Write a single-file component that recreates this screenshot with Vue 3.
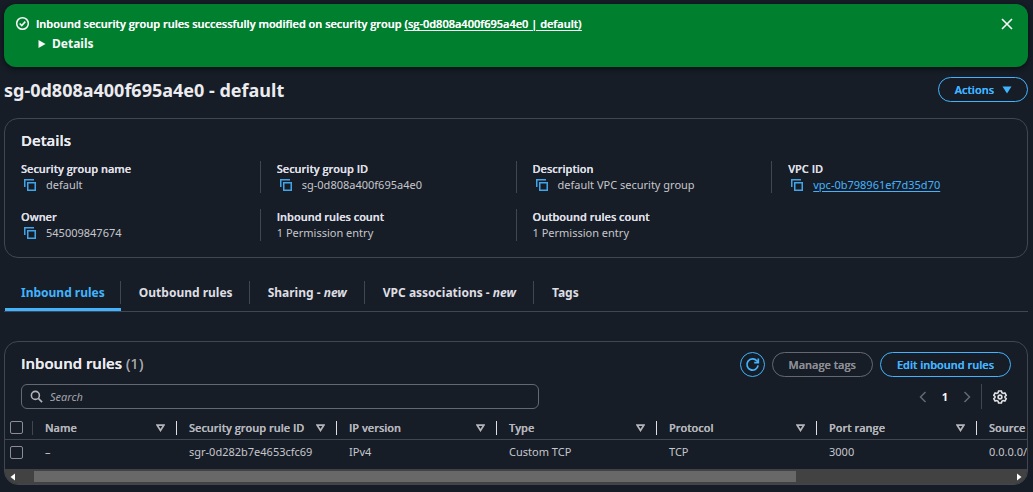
<script setup>
import { ref } from 'vue'

const details = [
  { label: 'Security group name', value: 'default', copy: true },
  { label: 'Security group ID', value: 'sg-0d808a400f695a4e0', copy: true },
  { label: 'Description', value: 'default VPC security group', copy: true },
  { label: 'VPC ID', value: 'vpc-0b798961ef7d35d70', copy: true, link: true },
  { label: 'Owner', value: '545009847674', copy: true },
  { label: 'Inbound rules count', value: '1 Permission entry' },
  { label: 'Outbound rules count', value: '1 Permission entry' },
]

const tabs = [
  { name: 'Inbound rules' },
  { name: 'Outbound rules' },
  { name: 'Sharing', isNew: true },
  { name: 'VPC associations', isNew: true },
  { name: 'Tags' },
]
const activeTab = ref('Inbound rules')

const columns = ['Name', 'Security group rule ID', 'IP version', 'Type', 'Protocol', 'Port range', 'Source']
const rows = [['–', 'sgr-0d282b7e4653cfc69', 'IPv4', 'Custom TCP', 'TCP', '3000', '0.0.0.0/']]
const search = ref('')
</script>

<template>
  <main class="page">
    <section class="flash" role="status">
      <svg class="flash-icon" viewBox="0 0 16 16" aria-hidden="true">
        <circle cx="8" cy="8" r="6.2" />
        <path d="M5 8l2.2 2.2L11 6" />
      </svg>
      <div class="flash-body">
        <div class="flash-text">
          Inbound security group rules successfully modified on security group
          <a href="#">(sg-0d808a400f695a4e0 | default)</a>
        </div>
        <button class="flash-details" type="button">
          <svg viewBox="0 0 8 8" aria-hidden="true"><path d="M0.5 0L7.5 4L0.5 8z" /></svg>Details
        </button>
      </div>
      <button class="flash-close" type="button" aria-label="Dismiss">
        <svg viewBox="0 0 16 16" aria-hidden="true"><path d="M3 3l10 10M13 3L3 13" /></svg>
      </button>
    </section>

    <header class="title-row">
      <h1>sg-0d808a400f695a4e0 - default</h1>
      <button class="btn" type="button">
        Actions<svg class="caret" viewBox="0 0 10 8" aria-hidden="true"><path d="M0.5 0.5h9L5 7.5z" /></svg>
      </button>
    </header>

    <section class="card details">
      <h2>Details</h2>
      <dl class="grid">
        <div v-for="d in details" :key="d.label" class="pair">
          <dt>{{ d.label }}</dt>
          <dd>
            <button v-if="d.copy" class="copy" type="button" :aria-label="'Copy ' + d.label">
              <svg viewBox="0 0 14 14" aria-hidden="true">
                <path d="M1.75 9V1.75H11" />
                <path d="M4.75 4.75h7.5v7.5h-7.5z" />
              </svg>
            </button>
            <a v-if="d.link" href="#">{{ d.value }}</a>
            <span v-else>{{ d.value }}</span>
          </dd>
        </div>
      </dl>
    </section>

    <nav class="tabs" role="tablist">
      <button
        v-for="t in tabs"
        :key="t.name"
        class="tab"
        :class="{ active: t.name === activeTab }"
        role="tab"
        type="button"
        :aria-selected="t.name === activeTab"
        @click="activeTab = t.name"
      >
        <span class="tab-label">{{ t.name }}<template v-if="t.isNew"> - <em>new</em></template></span>
      </button>
    </nav>

    <section class="card rules">
      <div class="rules-head">
        <h2>Inbound rules <span class="count">(1)</span></h2>
        <div class="actions">
          <button class="btn round" type="button" aria-label="Refresh">
            <svg viewBox="0 0 16 16" aria-hidden="true">
              <path d="M14 9A6 6 0 1 1 12.6 4L14 5.6" />
              <path d="M14.2 1.6V6H9.8" />
            </svg>
          </button>
          <button class="btn" type="button" disabled>Manage tags</button>
          <button class="btn" type="button">Edit inbound rules</button>
        </div>
      </div>

      <div class="tools">
        <label class="search">
          <svg viewBox="0 0 14 14" aria-hidden="true">
            <circle cx="5.8" cy="5.8" r="4.3" />
            <path d="M9 9l4 4" />
          </svg>
          <input v-model="search" type="text" placeholder="Search" aria-label="Search" />
        </label>
        <div class="pager">
          <button type="button" aria-label="Previous page">
            <svg viewBox="0 0 8 12" aria-hidden="true"><path d="M6.5 1L1.5 6l5 5" /></svg>
          </button>
          <button class="current" type="button">1</button>
          <button type="button" aria-label="Next page">
            <svg viewBox="0 0 8 12" aria-hidden="true"><path d="M1.5 1l5 5l-5 5" /></svg>
          </button>
          <button class="gear" type="button" aria-label="Preferences">
            <svg viewBox="0 0 14 14" aria-hidden="true">
              <path d="M5.6 1h2.8l.5 1.8 1.2.7 1.8-.5 1.4 2.4L12 6.4v1.2l1.3 1-1.4 2.4-1.8-.5-1.2.7-.5 1.8H5.6l-.5-1.8-1.2-.7-1.8.5L.7 8.6l1.3-1V6.4l-1.3-1L2.1 3l1.8.5 1.2-.7z" />
              <circle cx="7" cy="7" r="1.9" />
            </svg>
          </button>
        </div>
      </div>

      <div class="table-wrap">
        <table>
          <colgroup>
            <col class="c-check" />
            <col class="c-name" />
            <col v-for="c in columns.slice(1)" :key="c" class="c-data" />
          </colgroup>
          <thead>
            <tr>
              <th class="check"><div><input type="checkbox" aria-label="Select all rules" /></div></th>
              <th v-for="c in columns" :key="c">
                <div>
                  {{ c }}
                  <svg viewBox="0 0 9 8" aria-hidden="true"><path d="M1.2 1.2h6.6L4.5 6.5z" /></svg>
                </div>
              </th>
            </tr>
          </thead>
          <tbody>
            <tr v-for="r in rows" :key="r[1]">
              <td class="check"><input type="checkbox" :aria-label="'Select ' + r[1]" /></td>
              <td v-for="(v, i) in r" :key="i">{{ v }}</td>
            </tr>
          </tbody>
        </table>
      </div>
      <div class="scrollbar" aria-hidden="true">
        <svg viewBox="0 0 5 8"><path d="M5 0.5v7L0.5 4z" /></svg>
        <div class="track"><div class="thumb"></div></div>
        <svg viewBox="0 0 5 8"><path d="M0 0.5v7L4.5 4z" /></svg>
      </div>
    </section>
  </main>
</template>

<style>
body {
  margin: 0;
  background: #161d26;
}
</style>

<style scoped>
.page {
  box-sizing: border-box;
  padding: 4px 5px 6px 4px;
  font-family: "Noto Sans", "Open Sans", sans-serif;
  font-size: 11px;
  line-height: 16px;
  color: #c6c6cd;
}
.page * {
  box-sizing: border-box;
}
svg {
  display: block;
  fill: none;
  stroke: currentColor;
}
button {
  font: inherit;
  color: inherit;
  background: none;
  border: 0;
  padding: 0;
  cursor: pointer;
}
h1,
h2,
dl,
dd {
  margin: 0;
}
a {
  color: #42b4ff;
  text-underline-offset: 2px;
}
h2,
dt,
th,
.btn,
.flash-text {
  font-family: "Open Sans", "Noto Sans", sans-serif;
  font-weight: 600;
  text-shadow: 0 0 currentColor;
}

.flash {
  display: flex;
  align-items: flex-start;
  height: 63px;
  padding: 12px 13px 0 11px;
  border-radius: 12px;
  background: #00802f;
  color: #f9f9fa;
  box-shadow: 0 2px 5px #0a0f16;
}
.flash-icon {
  width: 15px;
  height: 15px;
  stroke-width: 1.6;
}
.flash-body {
  flex: 1;
  padding-left: 6px;
}
.flash a {
  color: inherit;
}
.flash-details {
  display: flex;
  align-items: center;
  gap: 6px;
  margin-top: 2px;
  padding-left: 2px;
  font-weight: 700;
  font-size: 12px;
  line-height: 20px;
}
.flash-details svg {
  width: 8px;
  height: 8px;
  fill: currentColor;
  stroke: none;
}
.flash-close svg {
  width: 16px;
  height: 16px;
  stroke-width: 1.6;
}

.title-row {
  display: flex;
  align-items: center;
  justify-content: space-between;
  margin-top: 10px;
}
h1 {
  font-size: 18px;
  font-weight: 700;
  line-height: 24px;
  color: #ebebf0;
}
h2 {
  font-size: 15px;
  line-height: 20px;
  color: #ebebf0;
}
.btn {
  display: flex;
  align-items: center;
  justify-content: center;
  height: 25px;
  padding: 0 16px;
  border: 1px solid #42b4ff;
  border-radius: 13px;
  color: #42b4ff;
}
.btn:disabled {
  color: #8c8c94;
  border-color: #656871;
}
.caret {
  width: 10px;
  height: 8px;
  margin-left: 8px;
  fill: currentColor;
  stroke: none;
}
.title-row .btn {
  padding: 0 15px 0 16px;
}

.card {
  border: 1px solid #424650;
  border-radius: 14px;
}
.details {
  margin-top: 16px;
  padding: 11px 16px 16px;
}
.grid {
  display: grid;
  grid-template-columns: repeat(4, 1fr);
  gap: 16px 33px;
  margin-top: 11px;
}
.pair:not(:nth-child(4n + 1)) {
  margin-left: -17px;
  padding-left: 16px;
  border-left: 1px solid #424650;
}
dt {
  color: #dedee3;
}
dd {
  display: flex;
  align-items: center;
}
.copy {
  margin: 0 9px 0 2px;
  color: #42a5ea;
}
.copy svg {
  width: 14px;
  height: 14px;
  stroke-width: 1.5;
}

.tabs {
  display: flex;
  margin-top: 17px;
  padding-left: 1px;
  border-bottom: 1px solid #424650;
}
.tab {
  padding: 6px 0 4px;
  border-bottom: 3px solid transparent;
  font-size: 12px;
  font-weight: 700;
  color: #dedee3;
}
.tab-label {
  display: block;
  padding: 0 16px 0 18px;
  border-right: 1px solid #424650;
  line-height: 23px;
}
.tab em {
  margin-right: 1px;
}
.tab:first-child .tab-label {
  padding: 0 15px 0 16px;
}
.tab:last-child .tab-label {
  border-right: 0;
}
.tab.active {
  color: #42b4ff;
  border-bottom-color: #42b4ff;
}

.rules {
  margin-top: 29px;
  overflow: hidden;
}
.rules-head {
  display: flex;
  align-items: flex-start;
  justify-content: space-between;
  padding: 10px 16px 0;
}
.rules-head h2 {
  padding-top: 1px;
}
.count {
  font-weight: 400;
  color: #a4a4ad;
}
.actions {
  display: flex;
  gap: 7px;
}
.round {
  width: 25px;
  padding: 0;
}
.round svg {
  width: 15px;
  height: 15px;
  stroke-width: 1.8;
}
.tools {
  display: flex;
  align-items: center;
  justify-content: space-between;
  padding: 7px 16px 0;
}
.search {
  display: flex;
  align-items: center;
  gap: 7px;
  width: 52.3%;
  height: 25px;
  padding: 0 8px;
  border: 1px solid #656871;
  border-radius: 6px;
}
.search svg {
  width: 13px;
  height: 13px;
  stroke-width: 1.7;
  color: #b4b4bb;
}
.search input {
  flex: 1;
  min-width: 0;
  padding: 0;
  border: 0;
  outline: 0;
  background: none;
  font: inherit;
  color: inherit;
}
.search input::placeholder {
  color: #a4a4ad;
  font-style: italic;
  opacity: 1;
}
.pager {
  display: flex;
  align-items: center;
  gap: 15px;
  color: #656871;
}
.pager svg {
  width: 8px;
  height: 12px;
  stroke-width: 1.5;
}
.pager .current {
  color: #f9f9fa;
  font-weight: 700;
}
.pager .gear {
  margin-left: -5px;
  padding: 6px 4px 5px 11px;
  border-left: 1px solid #424650;
  color: #dedee3;
}
.pager .gear svg {
  width: 14px;
  height: 14px;
  stroke-width: 1.6;
}

.table-wrap {
  overflow: hidden;
  margin-top: 7px;
}
table {
  width: 1132px;
  table-layout: fixed;
  border-collapse: separate;
  border-spacing: 0;
}
.c-check {
  width: 28px;
}
.c-name {
  width: 144px;
}
.c-data {
  width: 160px;
}
th {
  height: 24px;
  padding: 0;
  border-bottom: 1px solid #424650;
  text-align: left;
  color: #b4b4bb;
}
th div {
  display: flex;
  align-items: center;
  justify-content: space-between;
  height: 14px;
  padding: 0 11px 0 12px;
  border-right: 1px solid #dedee3;
}
th.check div {
  padding: 0 0 0 5px;
  border-right-color: #424650;
}
th svg {
  width: 9px;
  height: 8px;
  stroke-width: 1.7;
}
td {
  height: 29px;
  padding: 0 12px 5px;
}
td.check {
  padding: 0 0 4px 5px;
}
input[type="checkbox"] {
  display: block;
  appearance: none;
  width: 13px;
  height: 13px;
  margin: 0;
  border: 1px solid #8c8c94;
  border-radius: 2px;
}
.scrollbar {
  display: flex;
  align-items: center;
  justify-content: space-between;
  height: 15px;
  padding: 0 5px;
  background: #424242;
}
.scrollbar svg {
  width: 5px;
  height: 8px;
  fill: #fff;
  stroke: none;
}
.track {
  flex: 1;
  padding: 0 19px;
}
.thumb {
  width: 79%;
  height: 11px;
  background: #686868;
}
</style>
